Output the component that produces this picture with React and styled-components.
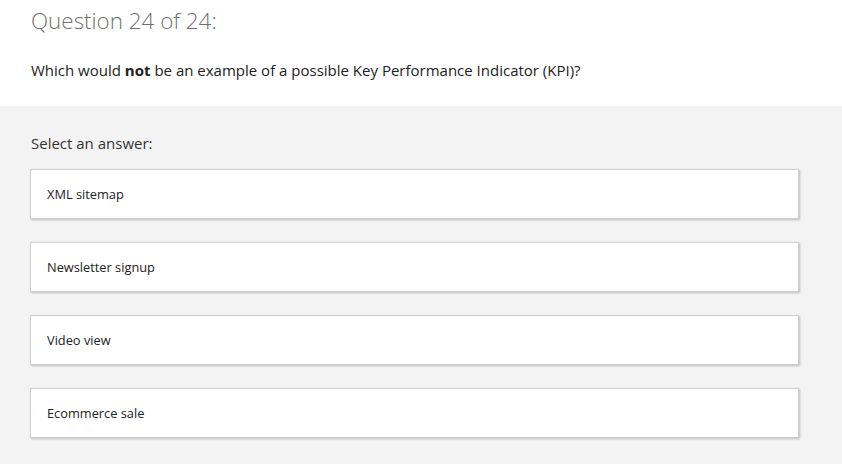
import React from "react";
import styled, { createGlobalStyle } from "styled-components";

const Global = createGlobalStyle`
  html, body { margin: 0; padding: 0; background: #f3f3f3; }
  body { font-family: "Open Sans", "Liberation Sans", sans-serif; }
`;

const Page = styled.div`
  width: 842px;
  min-height: 464px;
  background: #f3f3f3;
`;

const Header = styled.header`
  background: #ffffff;
  padding: 6px 31px 0;
  height: 100px;
`;

const Title = styled.h1`
  margin: 0;
  font-weight: 300;
  font-size: 22.4px;
  line-height: 30px;
  color: #6f6f6f;
`;

const Prompt = styled.p`
  margin: 24px 0 0;
  font-size: 15px;
  line-height: 20px;
  color: #222;
  b { font-weight: 700; }
`;

const Body = styled.section`
  padding: 27px 43px 0 31px;
`;

const Label = styled.div`
  font-size: 15px;
  line-height: 20px;
  color: #333;
  margin-bottom: 16px;
`;

const List = styled.div`
  display: flex;
  flex-direction: column;
  gap: 23px;
  margin-left: -1px;
`;

const Option = styled.div`
  box-sizing: border-box;
  height: 50px;
  background: #fff;
  border: 1px solid #cfcfcf;
  box-shadow: 1px 1px 2px rgba(0, 0, 0, 0.22);
  display: flex;
  align-items: center;
  padding-left: 16px;
  font-size: 12.8px;
  color: #222;
`;

const options = ["XML sitemap", "Newsletter signup", "Video view", "Ecommerce sale"];

export default function App() {
  return (
    <Page>
      <Global />
      <Header>
        <Title>Question 24 of 24:</Title>
        <Prompt>
          Which would <b>not</b> be an example of a possible Key Performance Indicator (KPI)?
        </Prompt>
      </Header>
      <Body>
        <Label>Select an answer:</Label>
        <List>
          {options.map((o) => (
            <Option key={o}>{o}</Option>
          ))}
        </List>
      </Body>
    </Page>
  );
}
